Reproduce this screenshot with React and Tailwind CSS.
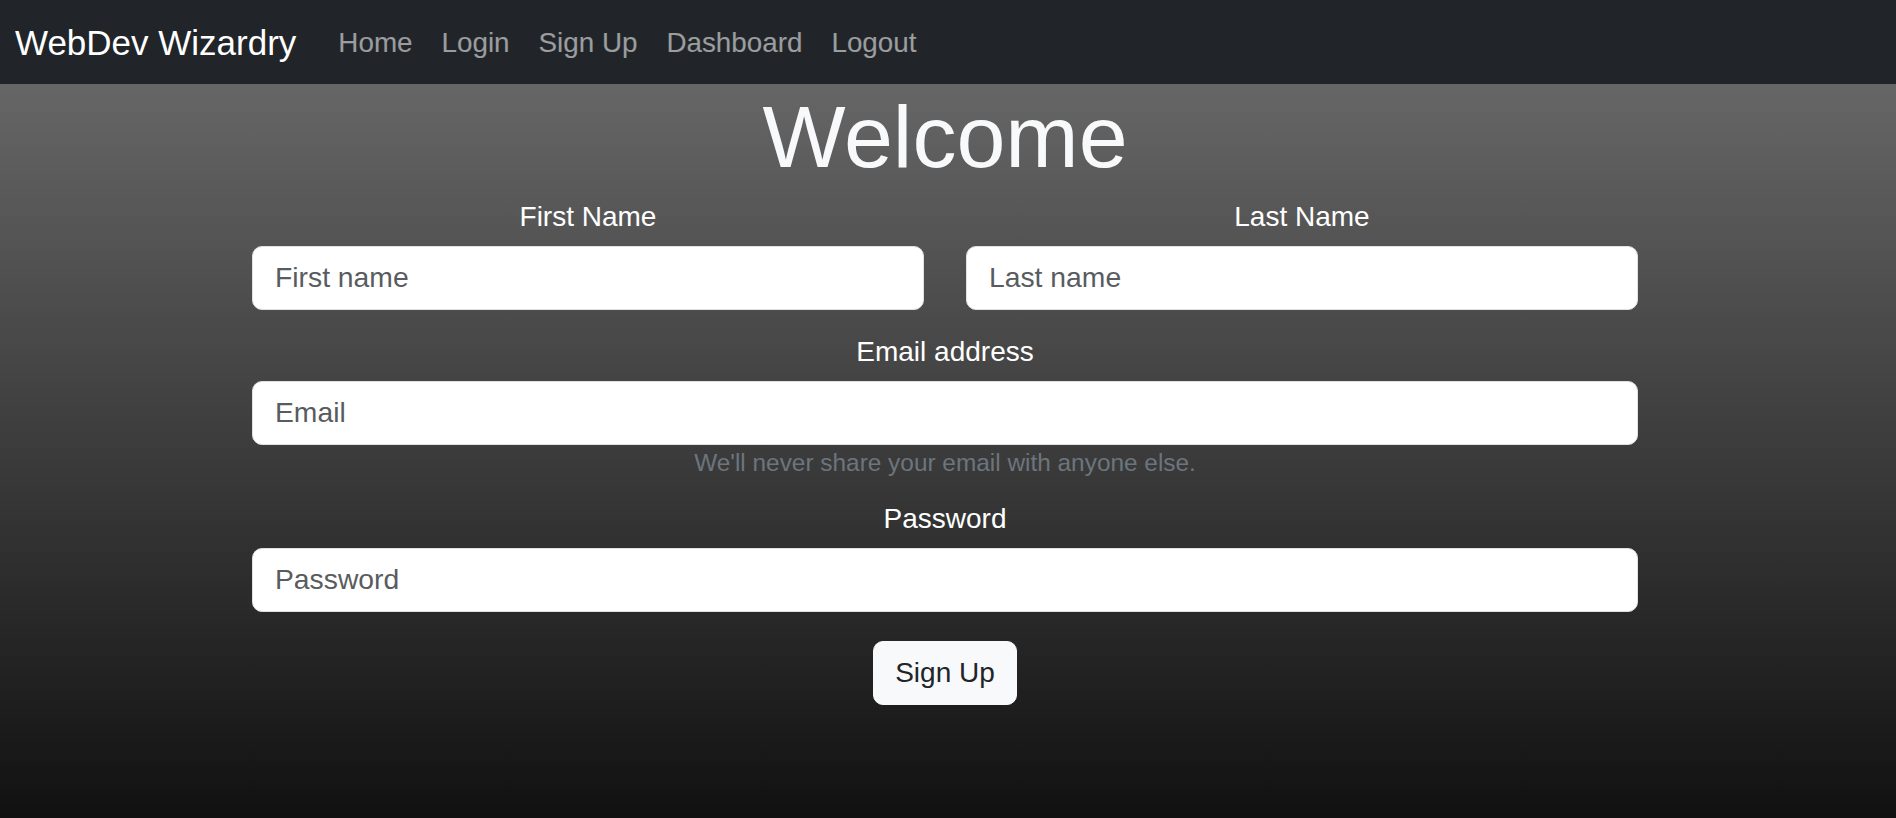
import React from 'react';

const navLinks = ['Home', 'Login', 'Sign Up', 'Dashboard', 'Logout'];

const Field = ({ label, placeholder, type = 'text', className = '' }) => (
  <div className={`flex flex-col ${className}`}>
    <label className="text-center text-[28px] leading-[41px] text-white mb-[9px]">{label}</label>
    <input
      type={type}
      placeholder={placeholder}
      className="h-[64px] w-full rounded-[10px] border border-[#dee2e6] bg-white px-[22px] text-[28.3px] text-[#212529] placeholder:text-[#595c5f] outline-none"
    />
  </div>
);

const App = () => {
  return (
    <div className="min-h-[818px] font-['Liberation_Sans',Arial,sans-serif]">
      <nav className="flex h-[84px] items-center bg-[#212529] pl-[15px]">
        <a className="text-[35px] leading-[51px] text-white">WebDev Wizardry</a>
        <ul className="ml-[42px] flex gap-[29px]">
          {navLinks.map((l) => (
            <li key={l} className="text-[27.8px] leading-[41px] text-white/55">
              {l}
            </li>
          ))}
        </ul>
      </nav>

      <main className="h-[734px] bg-linear-to-b/srgb from-[#666666] to-[#111111]">
        <div className="ml-[252px] w-[1386px] flex flex-col">
          <h1 className="text-center text-[88px] leading-[105.6px] text-[#f8f9fa]">Welcome</h1>

          <div className="mt-[6px] grid grid-cols-2 gap-x-[42px]">
            <Field label="First Name" placeholder="First name" />
            <Field label="Last Name" placeholder="Last name" />
          </div>

          <Field className="mt-[21px]" label="Email address" placeholder="Email" type="email" />
          <p className="text-center text-[24.4px] leading-[36px] text-[#6c757d]">
            We'll never share your email with anyone else.
          </p>

          <Field className="mt-[17px]" label="Password" placeholder="Password" type="password" />

          <div className="mt-[29px] flex justify-center">
            <button className="h-[64px] rounded-[10px] border border-[#f8f9fa] bg-[#f8f9fa] px-[21px] text-[28px] text-[#212529]">
              Sign Up
            </button>
          </div>
        </div>
      </main>
    </div>
  );
};

export default App;
